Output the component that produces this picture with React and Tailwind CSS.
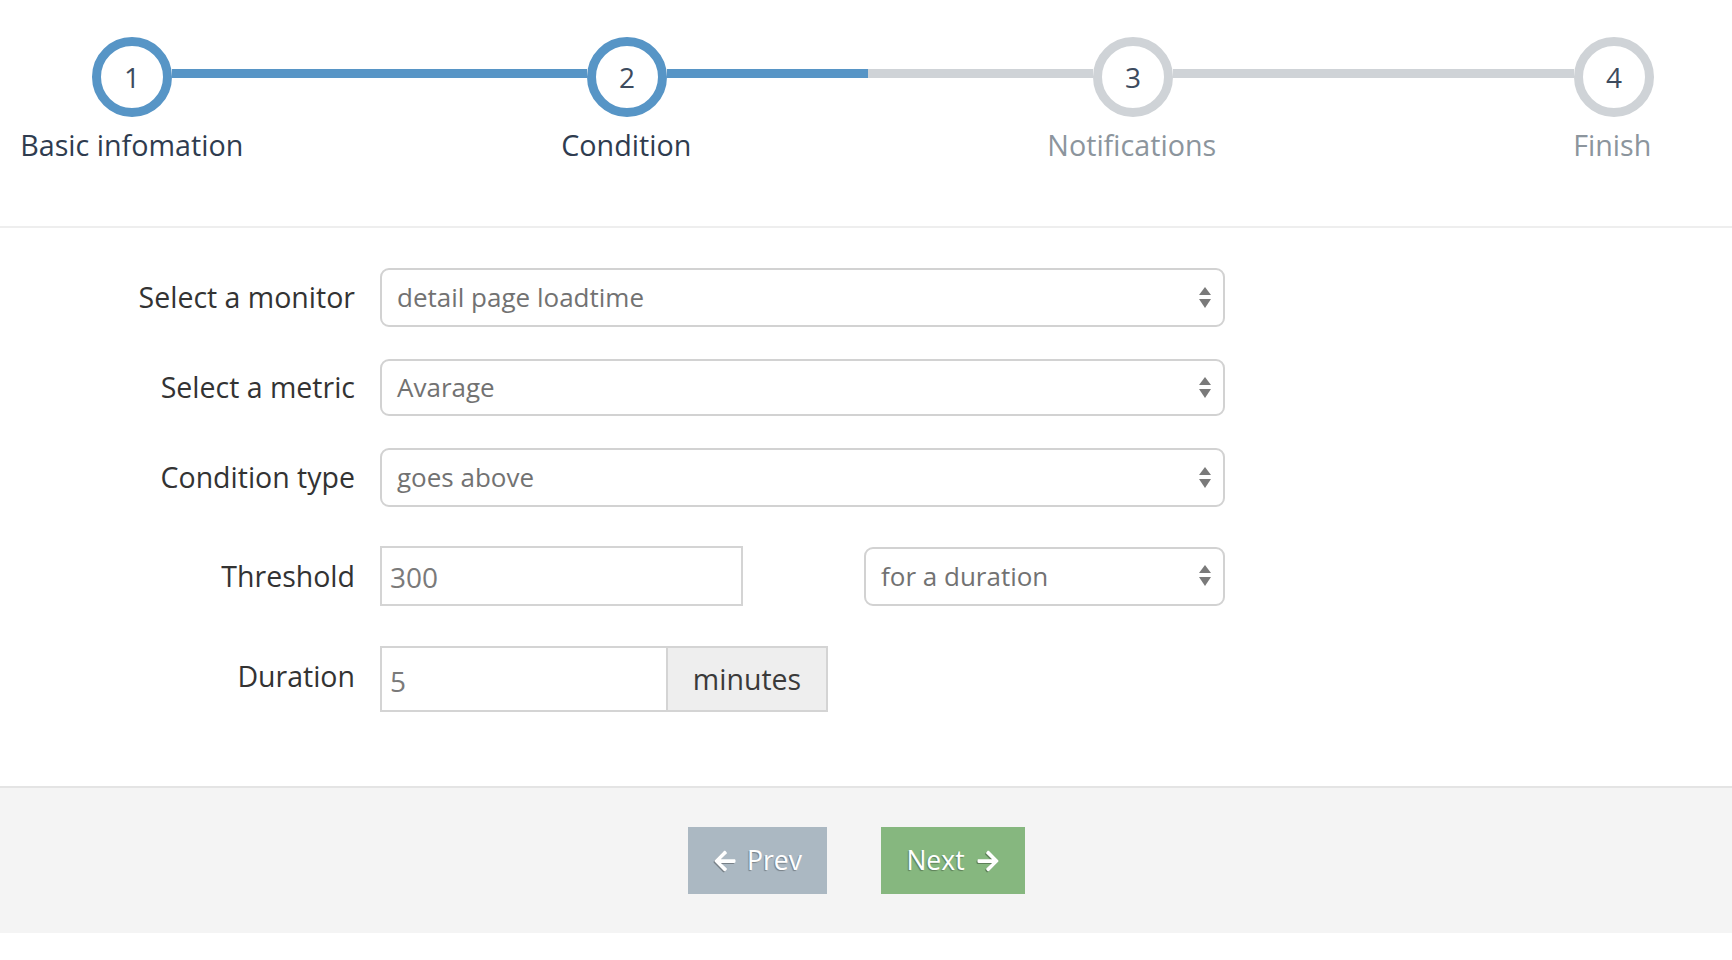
import React from "react";
import { FaArrowLeft, FaArrowRight } from "react-icons/fa";

function Circle({ n, active }) {
  return (
    <div
      className={
        "w-[80px] h-[80px] shrink-0 rounded-full border-[9px] bg-white flex items-center justify-center text-[28px] leading-none text-[#3d4b5e] " +
        (active ? "border-[#5795c6]" : "border-[#cfd3d7]")
      }
    >
      <span className="-mt-[1px]">{n}</span>
    </div>
  );
}

function Arrows() {
  return (
    <svg width="12" height="22" viewBox="0 0 12 22" className="shrink-0">
      <path d="M6 0 L12 8 L0 8 Z" fill="#7a7a7a" />
      <path d="M0 12 L12 12 L6 21 Z" fill="#7a7a7a" />
    </svg>
  );
}

function Select({ value, className = "", h = "h-[58px]" }) {
  return (
    <div
      className={
        "flex items-center justify-between rounded-[9px] border-2 border-[#d2d2d2] bg-white pl-[15px] pr-[12px] " +
        h +
        " " +
        className
      }
    >
      <span className="text-[26px] text-[#727272]">{value}</span>
      <Arrows />
    </div>
  );
}

function Label({ children, className = "" }) {
  return (
    <div className={"w-[355px] shrink-0 text-right text-[28.5px] text-[#333333] " + className}>
      {children}
    </div>
  );
}

export default function App() {
  return (
    <div className="w-[1732px] h-[960px] bg-white font-['Open_Sans',sans-serif] overflow-hidden">
      {/* Steps */}
      <div className="h-[228px] border-b-2 border-[#eeeeee] pt-[37px]">
        <div className="flex items-start pl-[92px]">
          <Circle n="1" active />
          <div className="mt-[32px] h-[9px] w-[415px] bg-[#5795c6]" />
          <Circle n="2" active />
          <div className="mt-[32px] h-[9px] w-[201px] bg-[#5795c6]" />
          <div className="mt-[32px] h-[9px] w-[225px] bg-[#cfd3d7]" />
          <Circle n="3" />
          <div className="mt-[32px] h-[9px] w-[401px] bg-[#cfd3d7]" />
          <Circle n="4" />
        </div>
        <div className="flex pl-[12px] mt-[9px] text-[28.7px] leading-[38px]">
          <div className="w-[240px] text-center text-[#2f3c4f]">Basic infomation</div>
          <div className="w-[240px] ml-[255px] text-center text-[#2f3c4f]">Condition</div>
          <div className="w-[240px] ml-[266px] text-center text-[#8c959d]">Notifications</div>
          <div className="w-[240px] ml-[241px] text-center text-[#8c959d]">Finish</div>
        </div>
      </div>

      {/* Form */}
      <div className="pt-[40px] pb-[74px]">
        <div className="flex items-center">
          <Label>Select a monitor</Label>
          <Select value="detail page loadtime" className="ml-[25px] w-[845px]" h="h-[59px]" />
        </div>
        <div className="flex items-center mt-[32px]">
          <Label>Select a metric</Label>
          <Select value="Avarage" className="ml-[25px] w-[845px]" h="h-[57px]" />
        </div>
        <div className="flex items-center mt-[32px]">
          <Label>Condition type</Label>
          <Select value="goes above" className="ml-[25px] w-[845px]" h="h-[59px]" />
        </div>
        <div className="flex items-center mt-[39px]">
          <Label>Threshold</Label>
          <div className="ml-[25px] w-[845px] flex justify-between items-center">
            <div className="w-[363px] h-[60px] border-2 border-[#d4d4d4] bg-white flex items-center pl-[8px] pt-[2px] text-[28px] text-[#7a7a7a]">
              300
            </div>
            <Select value="for a duration" className="w-[361px]" h="h-[59px]" />
          </div>
        </div>
        <div className="flex items-center mt-[40px]">
          <Label className="-mt-[6px]">Duration</Label>
          <div className="ml-[25px] flex h-[66px]">
            <div className="w-[288px] border-2 border-[#d4d4d4] bg-white flex items-center pl-[8px] pt-[4px] text-[28px] text-[#7a7a7a]">
              5
            </div>
            <div className="w-[160px] border-2 border-l-0 border-[#d4d4d4] bg-[#eeeeee] flex items-center justify-center text-[28.5px] text-[#3a3a3a]">
              minutes
            </div>
          </div>
        </div>
      </div>

      {/* Footer */}
      <div className="h-[147px] border-t-2 border-[#e4e4e4] bg-[#f4f4f4] flex items-center justify-center pr-[19px]">
        <div className="flex items-center gap-[54px]">
          <button className="w-[139px] h-[67px] bg-[#abb8c2] text-white text-[26.5px] flex items-center justify-center gap-[10px] [text-shadow:-1px_1px_1px_rgba(0,0,0,0.3)]">
            <FaArrowLeft className="w-[24px] h-[24px] drop-shadow-[-1px_1px_0.5px_rgba(0,0,0,0.3)]" />
            <span>Prev</span>
          </button>
          <button className="w-[144px] h-[67px] bg-[#86b77f] text-white text-[26.5px] flex items-center justify-center gap-[11px] [text-shadow:-1px_1px_1px_rgba(0,0,0,0.3)]">
            <span>Next</span>
            <FaArrowRight className="w-[24px] h-[24px] drop-shadow-[-1px_1px_0.5px_rgba(0,0,0,0.3)]" />
          </button>
        </div>
      </div>
    </div>
  );
}
